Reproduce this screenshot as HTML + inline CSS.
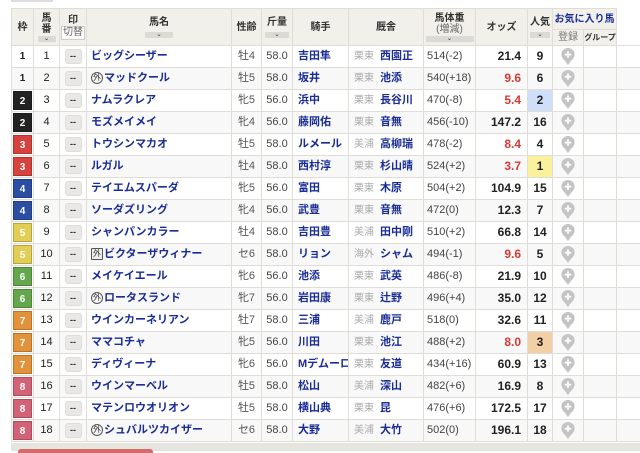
<!DOCTYPE html>
<html><head><meta charset="utf-8"><style>
*{margin:0;padding:0;box-sizing:border-box}
body{width:640px;height:451px;overflow:hidden;background:#fff;font-family:"Liberation Sans","Noto Sans CJK JP",sans-serif;position:relative}
table{position:absolute;left:11px;top:8px;border-collapse:collapse;table-layout:fixed;width:629px}
td,th{border:1px solid #e0ddd6;font-size:11px;text-align:center;padding:0;white-space:nowrap;overflow:hidden;color:#222;line-height:13px}
tbody td{height:21px}
th{background:#f2f0eb;font-weight:bold;font-size:10px;color:#333;line-height:11px}
tbody tr:nth-child(even) td{background:#f8f8f8}
tbody td.fr{padding:1px}
.fb{display:block;height:19px;line-height:19px;color:#fff;font-weight:bold;font-size:10px;border:1px solid rgba(0,0,0,.2)}
.f1{background:transparent;color:#222;border:none}
.f2{background:#222}.f3{background:#d8423c}.f4{background:#2b4ea2}.f5{background:#e2cd55}.f6{background:#63a64b}.f7{background:#e3923a}.f8{background:#d46276}
.mk{display:inline-block;width:17px;height:15px;background:#e9e8e6;border-radius:3px;font-size:9px;line-height:13px;font-weight:bold;color:#333;border:1px solid #ddd;vertical-align:middle}
.nm{text-align:left;padding-left:4px;color:#1a2d96;font-weight:bold;font-size:11px}
.jk{text-align:left;padding-left:5px;color:#1a2d96;font-weight:bold}
.tr{text-align:left;padding-left:5px;color:#1a2d96;font-weight:bold}
.tr span{color:#aaa;font-weight:normal;font-size:10px;margin-right:6px}
.wt{text-align:left;padding-left:3px;color:#444}
.od{text-align:right;padding-right:6px;font-weight:bold;font-size:12px}
.red{color:#d43a36}
.pp{font-weight:bold;font-size:12px}
.p1{background:#fbf19c!important}.p2{background:#cfdffa!important}.p3{background:#f3cfa6!important}
.sx{color:#555}.kg{color:#444}
.gai{display:inline-block;width:12px;height:12px;border:1px solid #555;border-radius:50%;font-size:8px;line-height:10px;text-align:center;color:#333;font-weight:normal;vertical-align:1px;margin-right:1px}
.gai2{border-radius:1px;background:#eee}
.srt{display:block;margin:1px auto 0;height:6px;background:#dcdad5;font-size:6px;line-height:6px;color:#555}
svg{display:block;margin:0 auto}
</style></head><body>
<div style="position:absolute;left:11px;top:0;width:42px;height:2px;background:#ddd"></div>
<table>
<colgroup><col style="width:22px"><col style="width:26px"><col style="width:27px"><col style="width:145px"><col style="width:30px"><col style="width:31px"><col style="width:56px"><col style="width:75px"><col style="width:52px"><col style="width:52px"><col style="width:25px"><col style="width:31px"><col style="width:33px"><col style="width:24px"></colgroup>
<thead>
<tr style="height:21px"><th rowspan="2">枠</th><th rowspan="2">馬<br>番<span class="srt" style="width:18px">⌄</span></th><th rowspan="2">印<br><span style="display:inline-block;border:1px solid #ccc;background:#fff;font-weight:normal;padding:0 1px;color:#666;line-height:12px">切替</span></th><th rowspan="2">馬名<span class="srt" style="width:28px;margin-top:4px">⌄</span></th><th rowspan="2">性齢</th><th rowspan="2">斤量<span class="srt" style="width:24px;margin-top:4px">⌄</span></th><th rowspan="2">騎手</th><th rowspan="2">厩舎</th><th rowspan="2">馬体重<br><span style="font-weight:normal;color:#666">(増減)</span><span class="srt" style="width:48px">⌄</span></th><th rowspan="2">オッズ</th><th rowspan="2">人気<span class="srt" style="width:20px;margin-top:4px">⌄</span></th><th colspan="2" style="color:#1a2d96;font-size:10px">お気に入り馬</th><th rowspan="2" style="background:#fff;border-top-color:#fff"></th></tr>
<tr style="height:16px"><th style="font-weight:normal;color:#777">登録</th><th style="font-size:8px">グループ</th></tr>
</thead>
<tbody>
<tr><td class="fr"><span class="fb f1">1</span></td><td>1</td><td><span class="mk">--</span></td><td class="nm">ビッグシーザー</td><td class="sx">牡4</td><td class="kg">58.0</td><td class="jk">吉田隼</td><td class="tr"><span>栗東</span>西園正</td><td class="wt">514(-2)</td><td class="od">21.4</td><td class="pp">9</td><td><svg width="14" height="17" viewBox="0 0 14 18"><path d="M7 0a7 7 0 0 1 7 7c0 4-4 6-7 11C4 13 0 11 0 7a7 7 0 0 1 7-7z" fill="#c4c4c4"/><path d="M7 3.5v7M3.5 7h7" stroke="#fff" stroke-width="1.8"/></svg></td><td></td><td></td></tr>
<tr><td class="fr"><span class="fb f1">1</span></td><td>2</td><td><span class="mk">--</span></td><td class="nm"><span class="gai">外</span>マッドクール</td><td class="sx">牡5</td><td class="kg">58.0</td><td class="jk">坂井</td><td class="tr"><span>栗東</span>池添</td><td class="wt">540(+18)</td><td class="od red">9.6</td><td class="pp">6</td><td><svg width="14" height="17" viewBox="0 0 14 18"><path d="M7 0a7 7 0 0 1 7 7c0 4-4 6-7 11C4 13 0 11 0 7a7 7 0 0 1 7-7z" fill="#c4c4c4"/><path d="M7 3.5v7M3.5 7h7" stroke="#fff" stroke-width="1.8"/></svg></td><td></td><td></td></tr>
<tr><td class="fr"><span class="fb f2">2</span></td><td>3</td><td><span class="mk">--</span></td><td class="nm">ナムラクレア</td><td class="sx">牝5</td><td class="kg">56.0</td><td class="jk">浜中</td><td class="tr"><span>栗東</span>長谷川</td><td class="wt">470(-8)</td><td class="od red">5.4</td><td class="pp p2">2</td><td><svg width="14" height="17" viewBox="0 0 14 18"><path d="M7 0a7 7 0 0 1 7 7c0 4-4 6-7 11C4 13 0 11 0 7a7 7 0 0 1 7-7z" fill="#c4c4c4"/><path d="M7 3.5v7M3.5 7h7" stroke="#fff" stroke-width="1.8"/></svg></td><td></td><td></td></tr>
<tr><td class="fr"><span class="fb f2">2</span></td><td>4</td><td><span class="mk">--</span></td><td class="nm">モズメイメイ</td><td class="sx">牝4</td><td class="kg">56.0</td><td class="jk">藤岡佑</td><td class="tr"><span>栗東</span>音無</td><td class="wt">456(-10)</td><td class="od">147.2</td><td class="pp">16</td><td><svg width="14" height="17" viewBox="0 0 14 18"><path d="M7 0a7 7 0 0 1 7 7c0 4-4 6-7 11C4 13 0 11 0 7a7 7 0 0 1 7-7z" fill="#c4c4c4"/><path d="M7 3.5v7M3.5 7h7" stroke="#fff" stroke-width="1.8"/></svg></td><td></td><td></td></tr>
<tr><td class="fr"><span class="fb f3">3</span></td><td>5</td><td><span class="mk">--</span></td><td class="nm">トウシンマカオ</td><td class="sx">牡5</td><td class="kg">58.0</td><td class="jk">ルメール</td><td class="tr"><span>美浦</span>高柳瑞</td><td class="wt">478(-2)</td><td class="od red">8.4</td><td class="pp">4</td><td><svg width="14" height="17" viewBox="0 0 14 18"><path d="M7 0a7 7 0 0 1 7 7c0 4-4 6-7 11C4 13 0 11 0 7a7 7 0 0 1 7-7z" fill="#c4c4c4"/><path d="M7 3.5v7M3.5 7h7" stroke="#fff" stroke-width="1.8"/></svg></td><td></td><td></td></tr>
<tr><td class="fr"><span class="fb f3">3</span></td><td>6</td><td><span class="mk">--</span></td><td class="nm">ルガル</td><td class="sx">牡4</td><td class="kg">58.0</td><td class="jk">西村淳</td><td class="tr"><span>栗東</span>杉山晴</td><td class="wt">524(+2)</td><td class="od red">3.7</td><td class="pp p1">1</td><td><svg width="14" height="17" viewBox="0 0 14 18"><path d="M7 0a7 7 0 0 1 7 7c0 4-4 6-7 11C4 13 0 11 0 7a7 7 0 0 1 7-7z" fill="#c4c4c4"/><path d="M7 3.5v7M3.5 7h7" stroke="#fff" stroke-width="1.8"/></svg></td><td></td><td></td></tr>
<tr><td class="fr"><span class="fb f4">4</span></td><td>7</td><td><span class="mk">--</span></td><td class="nm">テイエムスパーダ</td><td class="sx">牝5</td><td class="kg">56.0</td><td class="jk">富田</td><td class="tr"><span>栗東</span>木原</td><td class="wt">504(+2)</td><td class="od">104.9</td><td class="pp">15</td><td><svg width="14" height="17" viewBox="0 0 14 18"><path d="M7 0a7 7 0 0 1 7 7c0 4-4 6-7 11C4 13 0 11 0 7a7 7 0 0 1 7-7z" fill="#c4c4c4"/><path d="M7 3.5v7M3.5 7h7" stroke="#fff" stroke-width="1.8"/></svg></td><td></td><td></td></tr>
<tr><td class="fr"><span class="fb f4">4</span></td><td>8</td><td><span class="mk">--</span></td><td class="nm">ソーダズリング</td><td class="sx">牝4</td><td class="kg">56.0</td><td class="jk">武豊</td><td class="tr"><span>栗東</span>音無</td><td class="wt">472(0)</td><td class="od">12.3</td><td class="pp">7</td><td><svg width="14" height="17" viewBox="0 0 14 18"><path d="M7 0a7 7 0 0 1 7 7c0 4-4 6-7 11C4 13 0 11 0 7a7 7 0 0 1 7-7z" fill="#c4c4c4"/><path d="M7 3.5v7M3.5 7h7" stroke="#fff" stroke-width="1.8"/></svg></td><td></td><td></td></tr>
<tr><td class="fr"><span class="fb f5">5</span></td><td>9</td><td><span class="mk">--</span></td><td class="nm">シャンパンカラー</td><td class="sx">牡4</td><td class="kg">58.0</td><td class="jk">吉田豊</td><td class="tr"><span>美浦</span>田中剛</td><td class="wt">510(+2)</td><td class="od">66.8</td><td class="pp">14</td><td><svg width="14" height="17" viewBox="0 0 14 18"><path d="M7 0a7 7 0 0 1 7 7c0 4-4 6-7 11C4 13 0 11 0 7a7 7 0 0 1 7-7z" fill="#c4c4c4"/><path d="M7 3.5v7M3.5 7h7" stroke="#fff" stroke-width="1.8"/></svg></td><td></td><td></td></tr>
<tr><td class="fr"><span class="fb f5">5</span></td><td>10</td><td><span class="mk">--</span></td><td class="nm"><span class="gai gai2">外</span>ビクターザウィナー</td><td class="sx">セ6</td><td class="kg">58.0</td><td class="jk">リョン</td><td class="tr"><span>海外</span>シャム</td><td class="wt">494(-1)</td><td class="od red">9.6</td><td class="pp">5</td><td><svg width="14" height="17" viewBox="0 0 14 18"><path d="M7 0a7 7 0 0 1 7 7c0 4-4 6-7 11C4 13 0 11 0 7a7 7 0 0 1 7-7z" fill="#c4c4c4"/><path d="M7 3.5v7M3.5 7h7" stroke="#fff" stroke-width="1.8"/></svg></td><td></td><td></td></tr>
<tr><td class="fr"><span class="fb f6">6</span></td><td>11</td><td><span class="mk">--</span></td><td class="nm">メイケイエール</td><td class="sx">牝6</td><td class="kg">56.0</td><td class="jk">池添</td><td class="tr"><span>栗東</span>武英</td><td class="wt">486(-8)</td><td class="od">21.9</td><td class="pp">10</td><td><svg width="14" height="17" viewBox="0 0 14 18"><path d="M7 0a7 7 0 0 1 7 7c0 4-4 6-7 11C4 13 0 11 0 7a7 7 0 0 1 7-7z" fill="#c4c4c4"/><path d="M7 3.5v7M3.5 7h7" stroke="#fff" stroke-width="1.8"/></svg></td><td></td><td></td></tr>
<tr><td class="fr"><span class="fb f6">6</span></td><td>12</td><td><span class="mk">--</span></td><td class="nm"><span class="gai">外</span>ロータスランド</td><td class="sx">牝7</td><td class="kg">56.0</td><td class="jk">岩田康</td><td class="tr"><span>栗東</span>辻野</td><td class="wt">496(+4)</td><td class="od">35.0</td><td class="pp">12</td><td><svg width="14" height="17" viewBox="0 0 14 18"><path d="M7 0a7 7 0 0 1 7 7c0 4-4 6-7 11C4 13 0 11 0 7a7 7 0 0 1 7-7z" fill="#c4c4c4"/><path d="M7 3.5v7M3.5 7h7" stroke="#fff" stroke-width="1.8"/></svg></td><td></td><td></td></tr>
<tr><td class="fr"><span class="fb f7">7</span></td><td>13</td><td><span class="mk">--</span></td><td class="nm">ウインカーネリアン</td><td class="sx">牡7</td><td class="kg">58.0</td><td class="jk">三浦</td><td class="tr"><span>美浦</span>鹿戸</td><td class="wt">518(0)</td><td class="od">32.6</td><td class="pp">11</td><td><svg width="14" height="17" viewBox="0 0 14 18"><path d="M7 0a7 7 0 0 1 7 7c0 4-4 6-7 11C4 13 0 11 0 7a7 7 0 0 1 7-7z" fill="#c4c4c4"/><path d="M7 3.5v7M3.5 7h7" stroke="#fff" stroke-width="1.8"/></svg></td><td></td><td></td></tr>
<tr><td class="fr"><span class="fb f7">7</span></td><td>14</td><td><span class="mk">--</span></td><td class="nm">ママコチャ</td><td class="sx">牝5</td><td class="kg">56.0</td><td class="jk">川田</td><td class="tr"><span>栗東</span>池江</td><td class="wt">488(+2)</td><td class="od red">8.0</td><td class="pp p3">3</td><td><svg width="14" height="17" viewBox="0 0 14 18"><path d="M7 0a7 7 0 0 1 7 7c0 4-4 6-7 11C4 13 0 11 0 7a7 7 0 0 1 7-7z" fill="#c4c4c4"/><path d="M7 3.5v7M3.5 7h7" stroke="#fff" stroke-width="1.8"/></svg></td><td></td><td></td></tr>
<tr><td class="fr"><span class="fb f7">7</span></td><td>15</td><td><span class="mk">--</span></td><td class="nm">ディヴィーナ</td><td class="sx">牝6</td><td class="kg">56.0</td><td class="jk">Mデムーロ</td><td class="tr"><span>栗東</span>友道</td><td class="wt">434(+16)</td><td class="od">60.9</td><td class="pp">13</td><td><svg width="14" height="17" viewBox="0 0 14 18"><path d="M7 0a7 7 0 0 1 7 7c0 4-4 6-7 11C4 13 0 11 0 7a7 7 0 0 1 7-7z" fill="#c4c4c4"/><path d="M7 3.5v7M3.5 7h7" stroke="#fff" stroke-width="1.8"/></svg></td><td></td><td></td></tr>
<tr><td class="fr"><span class="fb f8">8</span></td><td>16</td><td><span class="mk">--</span></td><td class="nm">ウインマーベル</td><td class="sx">牡5</td><td class="kg">58.0</td><td class="jk">松山</td><td class="tr"><span>美浦</span>深山</td><td class="wt">482(+6)</td><td class="od">16.9</td><td class="pp">8</td><td><svg width="14" height="17" viewBox="0 0 14 18"><path d="M7 0a7 7 0 0 1 7 7c0 4-4 6-7 11C4 13 0 11 0 7a7 7 0 0 1 7-7z" fill="#c4c4c4"/><path d="M7 3.5v7M3.5 7h7" stroke="#fff" stroke-width="1.8"/></svg></td><td></td><td></td></tr>
<tr><td class="fr"><span class="fb f8">8</span></td><td>17</td><td><span class="mk">--</span></td><td class="nm">マテンロウオリオン</td><td class="sx">牡5</td><td class="kg">58.0</td><td class="jk">横山典</td><td class="tr"><span>栗東</span>昆</td><td class="wt">476(+6)</td><td class="od">172.5</td><td class="pp">17</td><td><svg width="14" height="17" viewBox="0 0 14 18"><path d="M7 0a7 7 0 0 1 7 7c0 4-4 6-7 11C4 13 0 11 0 7a7 7 0 0 1 7-7z" fill="#c4c4c4"/><path d="M7 3.5v7M3.5 7h7" stroke="#fff" stroke-width="1.8"/></svg></td><td></td><td></td></tr>
<tr><td class="fr"><span class="fb f8">8</span></td><td>18</td><td><span class="mk">--</span></td><td class="nm"><span class="gai">外</span>シュバルツカイザー</td><td class="sx">セ6</td><td class="kg">58.0</td><td class="jk">大野</td><td class="tr"><span>美浦</span>大竹</td><td class="wt">502(0)</td><td class="od">196.1</td><td class="pp">18</td><td><svg width="14" height="17" viewBox="0 0 14 18"><path d="M7 0a7 7 0 0 1 7 7c0 4-4 6-7 11C4 13 0 11 0 7a7 7 0 0 1 7-7z" fill="#c4c4c4"/><path d="M7 3.5v7M3.5 7h7" stroke="#fff" stroke-width="1.8"/></svg></td><td></td><td></td></tr>
</tbody></table>
<div style="position:absolute;left:11px;top:443px;width:629px;height:8px;background:#e6e4df"></div>
<div style="position:absolute;left:18px;top:449px;width:135px;height:4px;background:#d46a6a;border-radius:3px 3px 0 0"></div>
</body></html>
